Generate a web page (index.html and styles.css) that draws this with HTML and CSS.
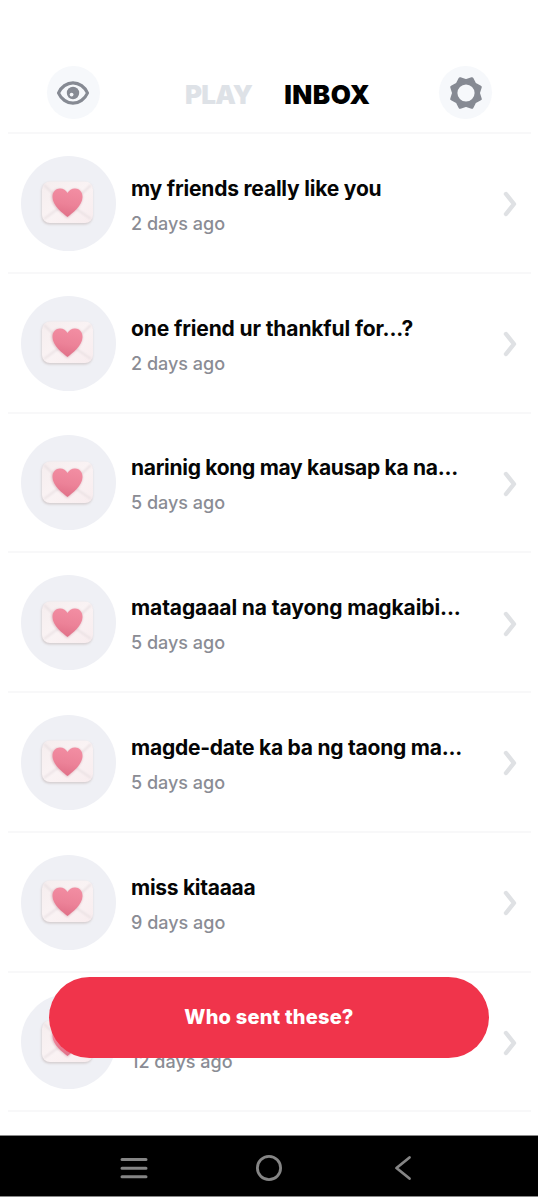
FILE: index.html
```html
<!DOCTYPE html>
<html lang="en">
<head>
<meta charset="utf-8">
<title>Inbox</title>
<link rel="stylesheet" href="styles.css">
</head>
<body>
<svg class="defs" width="0" height="0" aria-hidden="true">
  <defs>
    <linearGradient id="paper" x1="0" y1="0" x2="1" y2="1"><stop offset="0" stop-color="#f5edee"/><stop offset=".5" stop-color="#faf3f4"/><stop offset="1" stop-color="#f8ecee"/></linearGradient>
    <linearGradient id="love" x1="0.6" y1="0" x2="0.4" y2="1"><stop offset="0" stop-color="#f28da2"/><stop offset=".55" stop-color="#ec8298"/><stop offset="1" stop-color="#e06f87"/></linearGradient>
    <filter id="soft" x="-20%" y="-20%" width="140%" height="140%"><feGaussianBlur stdDeviation=".8"/></filter>
    <symbol id="letter" viewBox="0 0 56 48">
      <rect x="2.500" y="3.500" width="51" height="42" rx="8" fill="#d3ccce" filter="url(#soft)"/>
      <rect x="3" y="2.500" width="51" height="41.500" rx="8" fill="url(#paper)"/>
      <path d="M5 6 21 21M52 6 36 21M5 40 20 29M52 40 36 29" fill="none" stroke="#e2d8db" stroke-width="1.200" filter="url(#soft)"/>
      <path d="M28.500 39C24 35.500 12.500 27.500 12.500 18.500C12.500 13 16.500 9.800 20.500 9.800C24.500 9.800 27 12 28.500 14.500C30 12 32.500 9.800 36.500 9.800C40.500 9.800 43.500 13 43.500 18.500C43.500 27 33 35 28.500 39Z" fill="#c98a99" opacity=".5" filter="url(#soft)"/>
      <path d="M28.500 38C24 34.500 13.500 26.500 13.500 18C13.500 12.500 17 9.500 21 9.500C24.500 9.500 27 11.500 28.500 14C30 11.500 32.500 9.500 36 9.500C40 9.500 43.500 12.500 43.500 18C43.500 26.500 33 34.500 28.500 38Z" fill="url(#love)"/>
    </symbol>
    <symbol id="chevron" viewBox="0 0 14 26"><path d="M3 3 11 13 3 23" fill="none" stroke="#dfe1e4" stroke-width="4.400" stroke-linecap="round" stroke-linejoin="round"/></symbol>
  </defs>
</svg>
<div class="screen">
  <header class="header">
    <div class="round-button">
      <svg width="34" height="26" viewBox="0 0 34 26"><path d="M2.500 13C5 7 11 2.800 17 2.800S29 7 31.500 13C29 19 23 23.200 17 23.200S5 19 2.500 13Z" fill="none" stroke="#868a93" stroke-width="3.200" stroke-linejoin="round"/><circle cx="17" cy="13" r="6.200" fill="#868a93"/><circle cx="15.600" cy="14.600" r="1.900" fill="#f5f7fa"/></svg>
    </div>
    <nav class="tabs"><span class="tab tab-play">PLAY</span><span class="tab tab-inbox">INBOX</span></nav>
    <div class="round-button">
      <svg width="34" height="34" viewBox="-17 -17 34 34"><path fill="#868a93" stroke="#868a93" stroke-width="3.200" stroke-linejoin="round" fill-rule="evenodd" d="M12.300 0 14.200 5.900 8.700 8.700 5.900 14.200 0 12.300-5.900 14.200-8.700 8.700-14.200 5.900-12.300 0-14.200-5.900-8.700-8.700-5.900-14.200 0-12.300 5.900-14.200 8.700-8.700 14.200-5.900ZM10.200 0A10.200 10.200 0 1 0-10.200 0A10.200 10.200 0 1 0 10.200 0Z"/></svg>
    </div>
  </header>
  <main class="list">
    <article class="row"><div class="avatar"><svg class="letter"><use href="#letter"/></svg></div><div class="copy"><div class="title">my friends really like you</div><div class="time">2 days ago</div></div><svg class="chevron"><use href="#chevron"/></svg></article>
    <article class="row"><div class="avatar"><svg class="letter"><use href="#letter"/></svg></div><div class="copy"><div class="title t2">one friend ur thankful for...?</div><div class="time">2 days ago</div></div><svg class="chevron"><use href="#chevron"/></svg></article>
    <article class="row"><div class="avatar"><svg class="letter"><use href="#letter"/></svg></div><div class="copy"><div class="title t3">narinig kong may kausap ka na...</div><div class="time">5 days ago</div></div><svg class="chevron"><use href="#chevron"/></svg></article>
    <article class="row"><div class="avatar"><svg class="letter"><use href="#letter"/></svg></div><div class="copy"><div class="title t4">matagaaal na tayong magkaibi...</div><div class="time">5 days ago</div></div><svg class="chevron"><use href="#chevron"/></svg></article>
    <article class="row"><div class="avatar"><svg class="letter"><use href="#letter"/></svg></div><div class="copy"><div class="title t5">magde-date ka ba ng taong ma...</div><div class="time">5 days ago</div></div><svg class="chevron"><use href="#chevron"/></svg></article>
    <article class="row"><div class="avatar"><svg class="letter"><use href="#letter"/></svg></div><div class="copy"><div class="title t6">miss kitaaaa</div><div class="time">9 days ago</div></div><svg class="chevron"><use href="#chevron"/></svg></article>
    <article class="row"><div class="avatar"><svg class="letter"><use href="#letter"/></svg></div><div class="copy"><div class="title"></div><div class="time">12 days ago</div></div><svg class="chevron"><use href="#chevron"/></svg></article>
  </main>
  <button class="reveal">Who sent these?</button>
  <footer class="system-bar">
    <svg width="28" height="24" viewBox="0 0 28 24"><path d="M2 3.500H26M2 12.200H26M2 20.800H26" stroke="#858585" stroke-width="3" stroke-linecap="round"/></svg>
    <svg width="28" height="28" viewBox="0 0 28 28"><circle cx="14" cy="14" r="11.600" fill="none" stroke="#858585" stroke-width="2.800"/></svg>
    <svg width="28" height="28" viewBox="0 0 28 28"><path d="M19.500 3.500 6.500 14 19.500 24.500" fill="none" stroke="#858585" stroke-width="2.800" stroke-linecap="round" stroke-linejoin="round"/></svg>
  </footer>
</div>
</body>
</html>
```
FILE: styles.css
```css
* { box-sizing: border-box; }
body { margin: 0; background: #fff; font-family: Inter, "Liberation Sans", sans-serif; }
.defs { position: absolute; }
.screen { position: relative; width: 538px; height: 1200px; display: flex; flex-direction: column; overflow: hidden; }
.header { height: 134px; margin: 0 7px 0 8px; padding: 66px 39px 0 38.500px; display: flex; justify-content: space-between; align-items: flex-start; border-bottom: 2px solid #f8f8f9; }
.round-button { width: 53px; height: 53px; border-radius: 50%; background: #f6f8fb; display: flex; align-items: center; justify-content: center; }
.tabs { display: flex; gap: 32px; padding-top: 12px; margin-left: 17px; }
.tab { font-size: 26px; line-height: 34px; font-weight: 900; white-space: nowrap; }
.tab-play { color: #dee2e7; letter-spacing: -.8px; }
.tab-inbox { color: #000; letter-spacing: .5px; }
.list { margin: 0 7px 0 8px; }
.row { height: 139.750px; padding: 1px 14px 0 13px; display: flex; align-items: center; border-bottom: 2px solid #f8f8f9; }
.avatar { width: 95px; height: 95px; border-radius: 50%; background: #eff0f5; display: flex; align-items: center; justify-content: center; flex: none; }
.letter { width: 56px; height: 48px; margin-right: 4px; }
.copy { margin-left: 15px; padding-top: 4px; flex: 1; min-width: 0; }
.title { height: 25px; font-size: 21px; line-height: 28px; font-weight: 650; color: #050505; white-space: nowrap; overflow: hidden; letter-spacing: -.2px; }
.t2 { letter-spacing: -.13px; }
.t3 { letter-spacing: -.3px; }
.t4 { letter-spacing: -.1px; }
.t5 { letter-spacing: -.24px; }
.t6 { letter-spacing: -.28px; }
.time { margin-top: 12px; font-size: 18px; line-height: 24px; font-weight: 500; color: #8a8c94; white-space: nowrap; }
.chevron { width: 14px; height: 26px; flex: none; margin-top: 2px; }
.reveal { position: absolute; left: 49px; top: 977px; width: 440px; height: 81px; border: 0; border-radius: 41px; background: #f0344b; color: #fff; padding: 0 0 2px; font: 800 20px Inter, sans-serif; letter-spacing: .2px; }
.system-bar { position: absolute; left: 0; top: 1135px; width: 538px; height: 62px; background: #000; border-top: 1px solid #888; border-bottom: 1px solid #888; padding: 4px 120px 0; display: flex; align-items: center; justify-content: space-between; }
```
